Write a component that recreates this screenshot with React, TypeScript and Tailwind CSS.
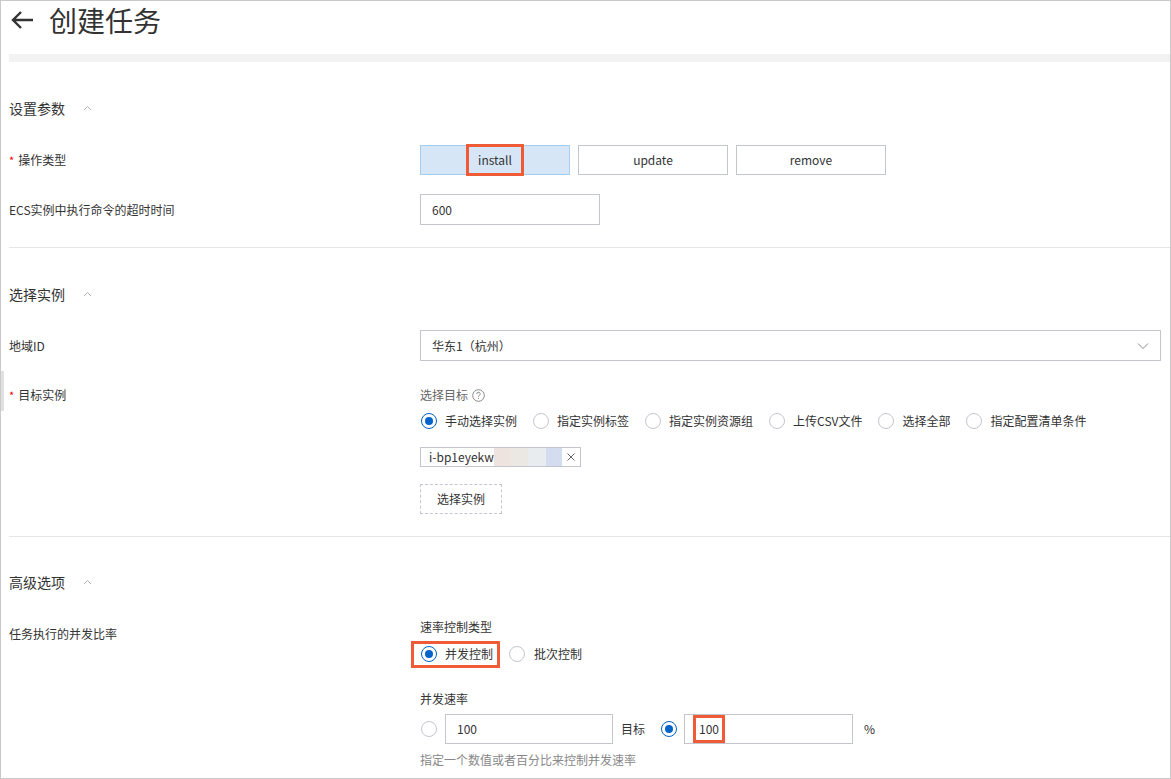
import React from 'react';

const FONT = { fontFamily: '"Noto Sans CJK SC", "Liberation Sans", sans-serif' };

function Chevron() {
  return (
    <svg width="9" height="6" viewBox="0 0 9 6" className="ml-[18px]">
      <path d="M1 5 L4.5 1.5 L8 5" fill="none" stroke="#b3b3b3" strokeWidth="1" />
    </svg>
  );
}

function Radio({ checked }: { checked?: boolean }) {
  return checked ? (
    <span className="flex w-[16px] h-[16px] rounded-full border border-[#0064c8] items-center justify-center shrink-0">
      <span className="w-[8px] h-[8px] rounded-full bg-[#0064c8]" />
    </span>
  ) : (
    <span className="block w-[16px] h-[16px] rounded-full border border-[#c4c6cf] bg-white shrink-0" />
  );
}

function Label({ text, required }: { text: string; required?: boolean }) {
  return (
    <div className="w-[411px] shrink-0 flex items-center text-[12px] text-[#333]">
      {required && <span className="text-[#e00] mr-[4px] text-[11px]">*</span>}
      {text}
    </div>
  );
}

function Heading({ text }: { text: string }) {
  return (
    <div className="h-[20px] flex items-center text-[14px] text-[#333]">
      {text}
      <Chevron />
    </div>
  );
}

export default function App() {
  const targets = ['手动选择实例', '指定实例标签', '指定实例资源组', '上传CSV文件', '选择全部', '指定配置清单条件'];

  return (
    <div
      className="w-[1171px] h-[779px] border border-[#c9c9c9] bg-white overflow-hidden relative"
      style={FONT}
    >
      <div className="absolute left-0 top-[370px] w-[3px] h-[40px] bg-[#e0e0e0]" />

      {/* Header */}
      <div className="h-[38px] flex items-center pl-[9px]">
        <svg width="24" height="20" viewBox="0 0 24 20">
          <path d="M11 2 L3 10 L11 18 M3 10 L23 10" fill="none" stroke="#333" strokeWidth="2.4" />
        </svg>
        <span className="ml-[15px] text-[28px] text-[#333] leading-none">创建任务</span>
      </div>
      <div className="mt-[15px] ml-[8px] h-[8px] bg-[#f2f2f2]" />

      <div className="pl-[8px]">
        {/* 设置参数 */}
        <div className="mt-[36px]">
          <Heading text="设置参数" />
        </div>
        <div className="mt-[27px] flex">
          <Label text="操作类型" required />
          <div className="flex gap-[8px]">
            <div className="w-[150px] h-[30px] bg-[#d6e6f7] border border-[#a9cdee] flex items-center justify-center">
              <span className="h-[32px] px-[9px] border-[3px] border-[#ef5a37] flex items-center text-[12px] text-[#333]">
                install
              </span>
            </div>
            <div className="w-[150px] h-[30px] border border-[#c4c6cf] flex items-center justify-center text-[12px] text-[#333]">
              update
            </div>
            <div className="w-[150px] h-[30px] border border-[#c4c6cf] flex items-center justify-center text-[12px] text-[#333]">
              remove
            </div>
          </div>
        </div>
        <div className="mt-[19px] flex">
          <Label text="ECS实例中执行命令的超时时间" />
          <div className="w-[180px] h-[31px] border border-[#c4c6cf] flex items-center px-[11px] text-[12px] text-[#333]">
            600
          </div>
        </div>
        <div className="mt-[22px] h-px bg-[#e6e6e6]" />

        {/* 选择实例 */}
        <div className="mt-[36px]">
          <Heading text="选择实例" />
        </div>
        <div className="mt-[26px] flex">
          <Label text="地域ID" />
          <div className="w-[741px] h-[31px] border border-[#c4c6cf] flex items-center justify-between pl-[11px] pr-[11px] text-[12px] text-[#333]">
            华东1（杭州）
            <svg width="12" height="8" viewBox="0 0 12 8">
              <path d="M1 1.5 L6 6.5 L11 1.5" fill="none" stroke="#888" strokeWidth="1" />
            </svg>
          </div>
        </div>
        <div className="mt-[24px] flex">
          <div className="w-[411px] shrink-0 h-[20px] flex items-center text-[12px] text-[#333]">
            <span className="text-[#e00] mr-[4px] text-[11px]">*</span>
            目标实例
          </div>
          <div className="flex flex-col">
            <div className="h-[20px] flex items-center text-[12px] text-[#666]">
              选择目标
              <svg width="13" height="13" viewBox="0 0 13 13" className="ml-[4px]">
                <circle cx="6.5" cy="6.5" r="5.8" fill="none" stroke="#888" strokeWidth="1" />
                <path d="M4.8 5 a1.7 1.7 0 1 1 2.4 1.5 c-0.5 0.3 -0.7 0.6 -0.7 1.3" fill="none" stroke="#888" strokeWidth="1" />
                <circle cx="6.5" cy="9.6" r="0.6" fill="#888" />
              </svg>
            </div>
            <div className="mt-[6px] h-[20px] flex items-center gap-[16px] pl-[1px]">
              {targets.map((t, i) => (
                <div key={t} className="flex items-center gap-[8px] text-[12px] text-[#333]">
                  <Radio checked={i === 0} />
                  {t}
                </div>
              ))}
            </div>
            <div className="mt-[16px] w-[161px] h-[20px] border border-[#c4c6cf] flex items-center pl-[8px] text-[12px] text-[#333]">
              <span>i-bp1eyekw</span>
              <span className="w-[17px] h-[18px] bg-[#eee3df]" />
              <span className="w-[17px] h-[18px] bg-[#ebe8e4]" />
              <span className="w-[18px] h-[18px] bg-[#e8ecee]" />
              <span className="w-[16px] h-[18px] bg-[#d3ddef]" />
              <svg width="10" height="10" viewBox="0 0 10 10" className="ml-[4px]">
                <path d="M1.5 1.5 L8.5 8.5 M8.5 1.5 L1.5 8.5" fill="none" stroke="#666" strokeWidth="1" />
              </svg>
            </div>
            <div className="mt-[17px] w-[82px] h-[30px] border border-dashed border-[#c4c6cf] flex items-center justify-center text-[12px] text-[#333]">
              选择实例
            </div>
          </div>
        </div>
        <div className="mt-[22px] h-px bg-[#e6e6e6]" />

        {/* 高级选项 */}
        <div className="mt-[35px]">
          <Heading text="高级选项" />
        </div>
        <div className="mt-[25px] flex">
          <div className="w-[411px] shrink-0 mt-[7px] h-[20px] flex items-center text-[12px] text-[#333]">
            任务执行的并发比率
          </div>
          <div className="flex flex-col">
            <div className="h-[20px] flex items-center text-[12px] text-[#333]">速率控制类型</div>
            <div className="mt-[4px] h-[26px] flex items-center -ml-[9px]">
              <div className="h-[27px] border-[3px] border-[#ef5a37] flex items-center gap-[8px] pl-[7px] pr-[4px] text-[12px] text-[#333]">
                <Radio checked />
                并发控制
              </div>
              <div className="ml-[9px] flex items-center gap-[9px] text-[12px] text-[#333]">
                <Radio />
                批次控制
              </div>
            </div>
            <div className="mt-[22px] h-[20px] flex items-center text-[12px] text-[#333]">并发速率</div>
            <div className="mt-[5px] h-[30px] flex items-center text-[12px] text-[#333]">
              <span className="ml-[1px]"><Radio /></span>
              <div className="ml-[8px] w-[168px] h-[30px] border border-[#c4c6cf] flex items-center pl-[11px]">100</div>
              <span className="ml-[8px]">目标</span>
              <span className="ml-[16px]"><Radio checked /></span>
              <div className="ml-[7px] w-[169px] h-[30px] border border-[#c4c6cf] flex items-center pl-[8px]">
                <span className="h-[28px] px-[3px] border-[3px] border-[#ef5a37] flex items-center">100</span>
              </div>
              <span className="ml-[11px]">%</span>
            </div>
            <div className="mt-[6px] h-[20px] flex items-center text-[12px] text-[#888]">
              指定一个数值或者百分比来控制并发速率
            </div>
          </div>
        </div>
      </div>
    </div>
  );
}
